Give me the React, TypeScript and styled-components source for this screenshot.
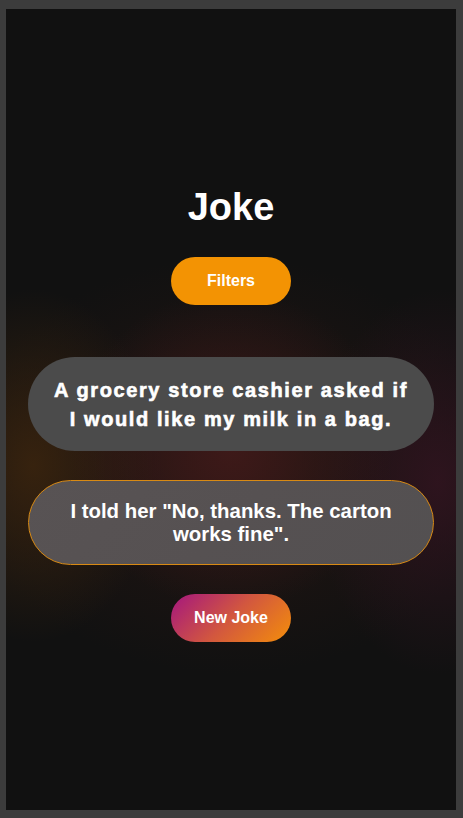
import styled, { createGlobalStyle } from "styled-components";
import { useState } from "react";

const GlobalStyle = createGlobalStyle`
	* {
		box-sizing: border-box;
	}
	html, body {
		margin: 0;
		padding: 0;
		background: #3c3c3c;
		font-family: "Liberation Sans", Arial, sans-serif;
	}
`;

const Frame = styled.div`
	height: 818px;
	padding: 9px 7px 8px 6px;
`;

const Panel = styled.main`
	height: 100%;
	background:
		radial-gradient(ellipse 36% 20% at 50% 55%, rgba(66, 26, 26, 0.85), rgba(66, 26, 26, 0) 100%),
		radial-gradient(ellipse 28% 22% at 6% 57%, rgba(58, 36, 14, 0.9), rgba(58, 36, 14, 0) 100%),
		radial-gradient(ellipse 28% 24% at 96% 59%, rgba(50, 20, 32, 0.85), rgba(50, 20, 32, 0) 100%),
		radial-gradient(ellipse 60% 26% at 50% 57%, rgba(38, 22, 18, 0.9), rgba(38, 22, 18, 0) 100%),
		#111111;
	display: flex;
	flex-direction: column;
	align-items: center;
	padding: 177px 22px 0 22px;
	color: #fff;
`;

const Title = styled.h1`
	margin: 0;
	font-size: 38px;
	line-height: 1.15;
	font-weight: 700;
`;

const PillButton = styled.button<{ $variant?: "orange" | "gradient" }>`
	width: 120px;
	height: 48px;
	border: none;
	border-radius: 24px;
	color: #fff;
	font-family: inherit;
	font-size: 16px;
	font-weight: 700;
	cursor: pointer;
	background: ${(props) =>
		props.$variant === "gradient"
			? "linear-gradient(135deg, #a4167f 0%, #d2573f 50%, #f48e0a 100%)"
			: "#f39303"};
`;

const FilterButton = styled(PillButton)`
	margin-top: 27px;
`;

const NewJokeButton = styled(PillButton)`
	margin-top: 29px;
`;

const Setup = styled.p`
	margin: 52px 0 0 0;
	width: 406px;
	padding: 19.5px 24px 16.5px;
	border-radius: 47px;
	background: #4b4b4b;
	font-size: 20px;
	line-height: 29px;
	font-weight: 700;
	letter-spacing: 1.6px;
	-webkit-text-stroke: 0.6px #fff;
	text-align: center;
`;

const Punchline = styled.p`
	margin: 29px 0 0 0;
	width: 406px;
	padding: 19px 20px 18px;
	border: 1px solid #d88a14;
	border-radius: 43px;
	background: linear-gradient(135deg, #585354 0%, #565152 50%, #535051 100%);
	font-size: 20.4px;
	line-height: 23px;
	font-weight: 700;
	text-align: center;
`;

interface IJoke {
	setup: string;
	punchline: string;
}

const jokes: IJoke[] = [
	{
		setup: "A grocery store cashier asked if I would like my milk in a bag.",
		punchline: 'I told her "No, thanks. The carton works fine".',
	},
];

function App() {
	const [index, setIndex] = useState(0);
	const joke = jokes[index];

	return (
		<>
			<GlobalStyle />
			<Frame>
				<Panel>
					<Title>Joke</Title>
					<FilterButton>Filters</FilterButton>
					<Setup>{joke.setup}</Setup>
					<Punchline>{joke.punchline}</Punchline>
					<NewJokeButton
						$variant="gradient"
						onClick={() => setIndex((index + 1) % jokes.length)}
					>
						New Joke
					</NewJokeButton>
				</Panel>
			</Frame>
		</>
	);
}

export default App;
